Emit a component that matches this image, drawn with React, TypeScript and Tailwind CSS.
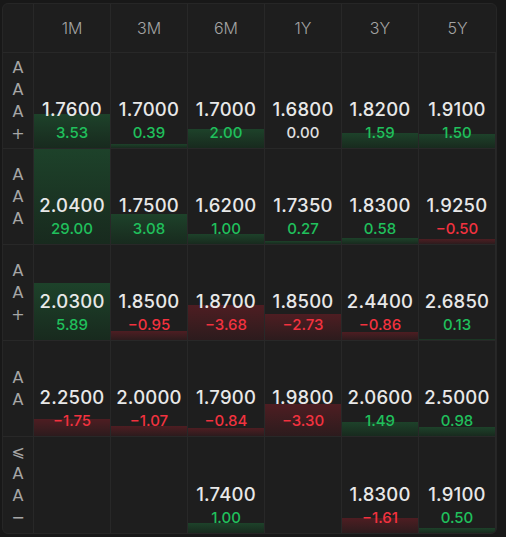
import React from "react";

type Cell = { v: string; c: number } | null;

const headers = ["1M", "3M", "6M", "1Y", "3Y", "5Y"];

const rows: { label: string[]; cells: Cell[] }[] = [
  {
    label: ["A", "A", "A", "+"],
    cells: [
      { v: "1.7600", c: 3.53 },
      { v: "1.7000", c: 0.39 },
      { v: "1.7000", c: 2.0 },
      { v: "1.6800", c: 0 },
      { v: "1.8200", c: 1.59 },
      { v: "1.9100", c: 1.5 },
    ],
  },
  {
    label: ["A", "A", "A"],
    cells: [
      { v: "2.0400", c: 29.0 },
      { v: "1.7500", c: 3.08 },
      { v: "1.6200", c: 1.0 },
      { v: "1.7350", c: 0.27 },
      { v: "1.8300", c: 0.58 },
      { v: "1.9250", c: -0.5 },
    ],
  },
  {
    label: ["A", "A", "+"],
    cells: [
      { v: "2.0300", c: 5.89 },
      { v: "1.8500", c: -0.95 },
      { v: "1.8700", c: -3.68 },
      { v: "1.8500", c: -2.73 },
      { v: "2.4400", c: -0.86 },
      { v: "2.6850", c: 0.13 },
    ],
  },
  {
    label: ["A", "A"],
    cells: [
      { v: "2.2500", c: -1.75 },
      { v: "2.0000", c: -1.07 },
      { v: "1.7900", c: -0.84 },
      { v: "1.9800", c: -3.3 },
      { v: "2.0600", c: 1.49 },
      { v: "2.5000", c: 0.98 },
    ],
  },
  {
    label: ["⩽", "A", "A", "−"],
    cells: [
      null,
      null,
      { v: "1.7400", c: 1.0 },
      null,
      { v: "1.8300", c: -1.61 },
      { v: "1.9100", c: 0.5 },
    ],
  },
];

function fmt(c: number) {
  if (c < 0) return "−" + Math.abs(c).toFixed(2);
  return c.toFixed(2);
}

function DataCell({ cell, last }: { cell: Cell; last: boolean }) {
  return (
    <div
      className={`relative h-[96px] border-r border-[#282828] ${
        last ? "" : "border-b"
      } overflow-hidden`}
    >
      {cell && (
        <>
          {cell.c !== 0 && (
            <div
              className={`absolute left-0 right-0 bottom-0 ${
                cell.c > 0
                  ? "bg-gradient-to-b from-[#1d422a] to-[#182a1e]"
                  : "bg-gradient-to-b from-[#4e1d22] to-[#2c1b1d]"
              }`}
              style={{ height: Math.max(1, Math.min(96, Math.abs(cell.c) * 9.6)) }}
            />
          )}
          <div className="relative flex h-full flex-col items-center justify-end pb-[4px]">
            <div className="text-[18.5px] leading-[26px] font-medium text-[#e8e8e8] tracking-[0.2px]">
              {cell.v}
            </div>
            <div
              className={`text-[15px] leading-[22px] font-medium ${
                cell.c > 0
                  ? "text-[#20c05c]"
                  : cell.c < 0
                  ? "text-[#f2323f]"
                  : "text-[#e0e0e0]"
              }`}
            >
              {fmt(cell.c)}
            </div>
          </div>
        </>
      )}
    </div>
  );
}

export default function App() {
  return (
    <div
      className="w-[506px] h-[537px] bg-[#181818] pt-[3px] pl-[2px]"
      style={{ fontFamily: "Inter, 'Noto Sans', 'DejaVu Sans', sans-serif" }}
    >
      <div className="w-[495px] rounded-[6px] border border-[#262626] bg-[#1e1e1e] overflow-hidden">
        <div className="grid grid-cols-[31px_repeat(6,77px)]">
          <div className="h-[49px] border-r border-b border-[#282828]" />
          {headers.map((h, i) => (
            <div
              key={h}
              className={`h-[49px] flex items-center justify-center border-b border-[#282828] text-[16px] font-light text-[#a4a4a4] ${
                i < 5 ? "border-r" : ""
              }`}
            >
              {h}
            </div>
          ))}
          {rows.map((r, ri) => (
            <React.Fragment key={ri}>
              <div
                className={`h-[96px] flex flex-col items-center justify-center border-r border-[#282828] ${
                  ri < rows.length - 1 ? "border-b" : ""
                }`}
              >
                {r.label.map((l, li) => (
                  <div
                    key={li}
                    className="text-[16px] leading-[22px] text-[#a6a6a6]"
                    style={{ fontFamily: "'DejaVu Sans', Inter, sans-serif" }}
                  >
                    {l}
                  </div>
                ))}
              </div>
              {r.cells.map((c, ci) => (
                <DataCell key={ci} cell={c} last={ri === rows.length - 1} />
              ))}
            </React.Fragment>
          ))}
        </div>
      </div>
    </div>
  );
}
